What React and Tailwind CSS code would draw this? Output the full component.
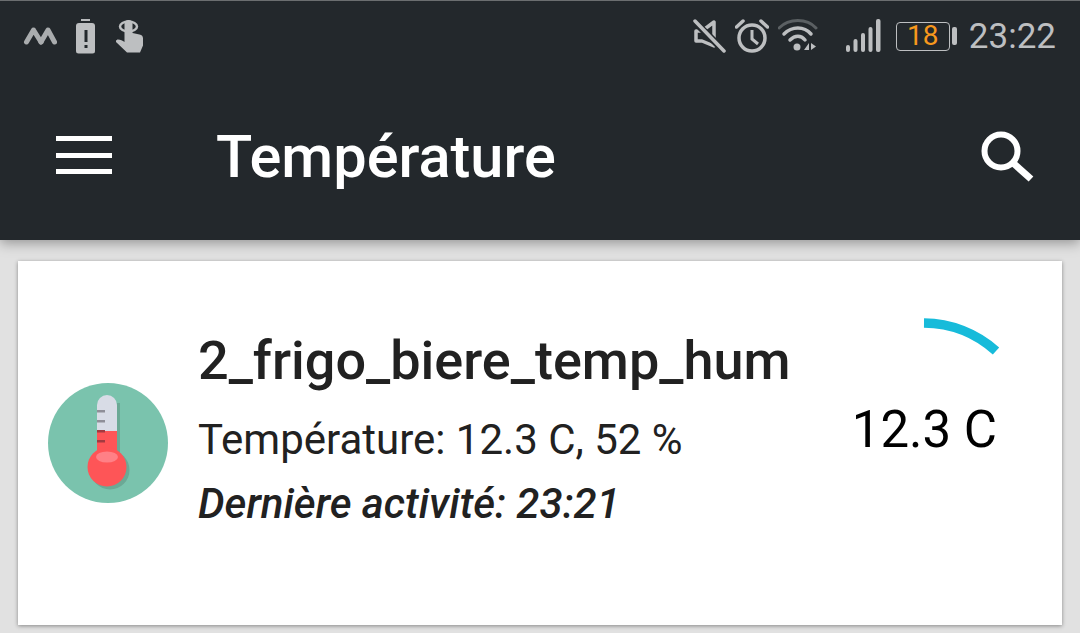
import React from 'react'

const roboto = { fontFamily: 'Roboto, sans-serif' }

function LeftIcons() {
  return (
    <div className="flex items-center">
      <svg width="34" height="24" viewBox="0 0 34 24" className="ml-[23px]">
        <path d="M3.500 18 L10.500 6 L18 18" fill="none" stroke="#a9acae" strokeWidth="5" strokeLinecap="round" strokeLinejoin="round" />
        <path d="M18 18 L25 6 L31.500 18" fill="none" stroke="#a9acae" strokeWidth="5" strokeLinecap="round" strokeLinejoin="round" />
      </svg>
      <svg width="20" height="35" viewBox="0 0 20 35" className="ml-[19px]">
        <rect x="5" y="0" width="9" height="2" fill="#b9bbbd" />
        <path d="M3 4h13a3 3 0 0 1 3 3v25a2.500 2.500 0 0 1-2.500 2.500h-14A2.500 2.500 0 0 1 0 32V7a3 3 0 0 1 3-3z" fill="#bdbfc1" />
        <rect x="8.500" y="11" width="3" height="12" fill="#23282c" />
        <rect x="8.500" y="26" width="3" height="3" fill="#23282c" />
      </svg>
      <svg width="28" height="34" viewBox="0 0 28 34" className="ml-[20px]">
        <ellipse cx="12.500" cy="7.500" rx="8.500" ry="5" fill="none" stroke="#bdbfc1" strokeWidth="2.500" />
        <path d="M8.500 5a4 4 0 0 1 8 0V14l7 1.500a4 4 0 0 1 3.500 4v7l-3 7H11L0 23c-.5-1 .5-2.500 2-2.500 2.500 0 4.500 1 6.500 2.500z" fill="#bdbfc1" />
      </svg>
    </div>
  )
}

function RightIcons() {
  return (
    <div className="flex items-center mr-[24px]">
      <svg width="33" height="34" viewBox="0 0 33 34">
        <path d="M3 12h6l12-9v24L9 22H3z" fill="none" stroke="#bdbfc1" strokeWidth="3.500" strokeLinejoin="round" />
        <path d="M1 2 L31 32" stroke="#23282c" strokeWidth="7" />
        <path d="M2 2 L31 32" stroke="#bdbfc1" strokeWidth="3.500" strokeLinecap="round" />
      </svg>
      <svg width="34" height="34" viewBox="0 0 34 34" className="ml-[9px]">
        <circle cx="17" cy="19" r="13" fill="none" stroke="#bdbfc1" strokeWidth="3.500" />
        <path d="M17 11v9l6 5" fill="none" stroke="#bdbfc1" strokeWidth="3" />
        <path d="M1.500 8 L8 2 M32.500 8 L26 2" stroke="#bdbfc1" strokeWidth="3.500" strokeLinecap="round" />
      </svg>
      <svg width="40" height="34" viewBox="0 0 40 34" className="ml-[9px]">
        <path d="M1 9 C11 -1 29 -1 38 9" fill="none" stroke="#5b6063" strokeWidth="3" strokeLinecap="round" />
        <path d="M6 15 C14 7 26 7 33 15" fill="none" stroke="#bdbfc1" strokeWidth="3.500" strokeLinecap="round" />
        <path d="M12 21 C17 16 23 16 27 21" fill="none" stroke="#bdbfc1" strokeWidth="3.500" strokeLinecap="round" />
        <circle cx="19" cy="28" r="3.500" fill="#bdbfc1" />
        <path d="M31 24v7h-5zM33 24l5 3.500-5 3.500z" fill="#bdbfc1" />
      </svg>
      <svg width="35" height="34" viewBox="0 0 35 34" className="ml-[28px]">
        <rect x="0" y="26" width="4" height="7" rx="2" fill="#bdbfc1" />
        <rect x="7.500" y="20" width="4" height="13" rx="2" fill="#bdbfc1" />
        <rect x="15" y="14" width="4" height="19" rx="2" fill="#bdbfc1" />
        <rect x="22.500" y="8" width="4" height="25" rx="2" fill="#bdbfc1" />
        <rect x="30" y="0" width="4.500" height="33" rx="2" fill="#bdbfc1" />
      </svg>
      <div className="ml-[15px] flex items-center">
        <div className="w-[54px] h-[29px] rounded-[4px] border-[1.5px] border-[#bdbfc1] flex items-center justify-center text-[#f7981d] text-[28px] font-normal leading-none" style={roboto}>
          18
        </div>
        <div className="ml-[2px] w-[5px] h-[18px] rounded-[2px] bg-[#bdbfc1]"></div>
      </div>
      <span className="ml-[12px] text-[35px] leading-none text-[#bdbfc1] font-['Roboto',sans-serif]">23:22</span>
    </div>
  )
}

function Thermometer() {
  return (
    <svg width="120" height="120" viewBox="0 0 120 120" className="shrink-0">
      <circle cx="60" cy="60" r="60" fill="#7ac3ad" />
      <rect x="69" y="20" width="3" height="50" fill="#6ba995" />
      <circle cx="62" cy="87" r="19.500" fill="#6ba995" />
      <path d="M49 22a10 10 0 0 1 20 0v49H49z" fill="#d8dce6" />
      <path d="M49 48h20v25H49z" fill="#fe5557" />
      <circle cx="59" cy="84" r="19.500" fill="#fe5557" />
      <ellipse cx="59" cy="74" rx="11" ry="5.500" fill="#ff8086" />
      <rect x="49" y="27" width="8" height="2.500" fill="#8f8f98" />
      <rect x="49" y="37" width="8" height="2.500" fill="#8f8f98" />
      <rect x="49" y="47" width="8" height="2.500" fill="#a33a40" />
      <rect x="49" y="57" width="8" height="2.500" fill="#a33a40" />
    </svg>
  )
}

export default function App() {
  return (
    <div className="w-[1080px] h-[633px] overflow-hidden bg-[#e1e1e1] flex flex-col" style={roboto}>
      <header className="relative z-10 h-[240px] shrink-0 bg-[#23282c] border-t border-[#6b6e70] shadow-[0_3px_12px_rgba(0,0,0,0.35)]">
        <div className="h-[70px] flex items-center justify-between">
          <LeftIcons />
          <RightIcons />
        </div>
        <div className="h-[168px] flex items-center pl-[56px] pr-[45px]">
          <div className="w-[56px] h-[38px] flex flex-col justify-between">
            <div className="h-[5px] bg-white"></div>
            <div className="h-[5px] bg-white"></div>
            <div className="h-[5px] bg-white"></div>
          </div>
          <h1 className="ml-[104px] mt-[6px] flex-1 text-[59.5px] leading-none font-medium text-white">Température</h1>
          <svg width="54" height="52" viewBox="0 0 54 52" className="mt-[4px]">
            <circle cx="20" cy="20" r="16.500" fill="none" stroke="white" strokeWidth="6" />
            <path d="M31 31 L50 48" stroke="white" strokeWidth="7" />
          </svg>
        </div>
      </header>

      <section className="mx-[18px] mt-[21px] h-[364px] bg-white shadow-[0_1px_4px_rgba(0,0,0,0.4)] flex items-center pl-[30px] pr-[65px]">
        <Thermometer />
        <div className="ml-[30px] flex-1 self-start mt-[72px] flex flex-col">
          <div className="text-[54px] leading-[56px] font-medium text-[#212121]">2_frigo_biere_temp_hum</div>
          <div className="mt-[27px] text-[42px] leading-[48px] text-[#212121]">Température: 12.3 C, 52 %</div>
          <div className="mt-[18px] text-[42px] leading-[44px] font-medium italic text-[#212121]">Dernière activité: 23:21</div>
        </div>
        <div className="self-start mt-[55px] flex flex-col items-end">
          <svg width="80" height="40" viewBox="0 0 80 40" className="mr-[-3px]">
            <path d="M4 7 A109 109 0 0 1 76 35" fill="none" stroke="#17bbda" strokeWidth="9.500" />
          </svg>
          <div className="mt-[44px] text-[51px] leading-[60px] text-black">12.3 C</div>
        </div>
      </section>
    </div>
  )
}
